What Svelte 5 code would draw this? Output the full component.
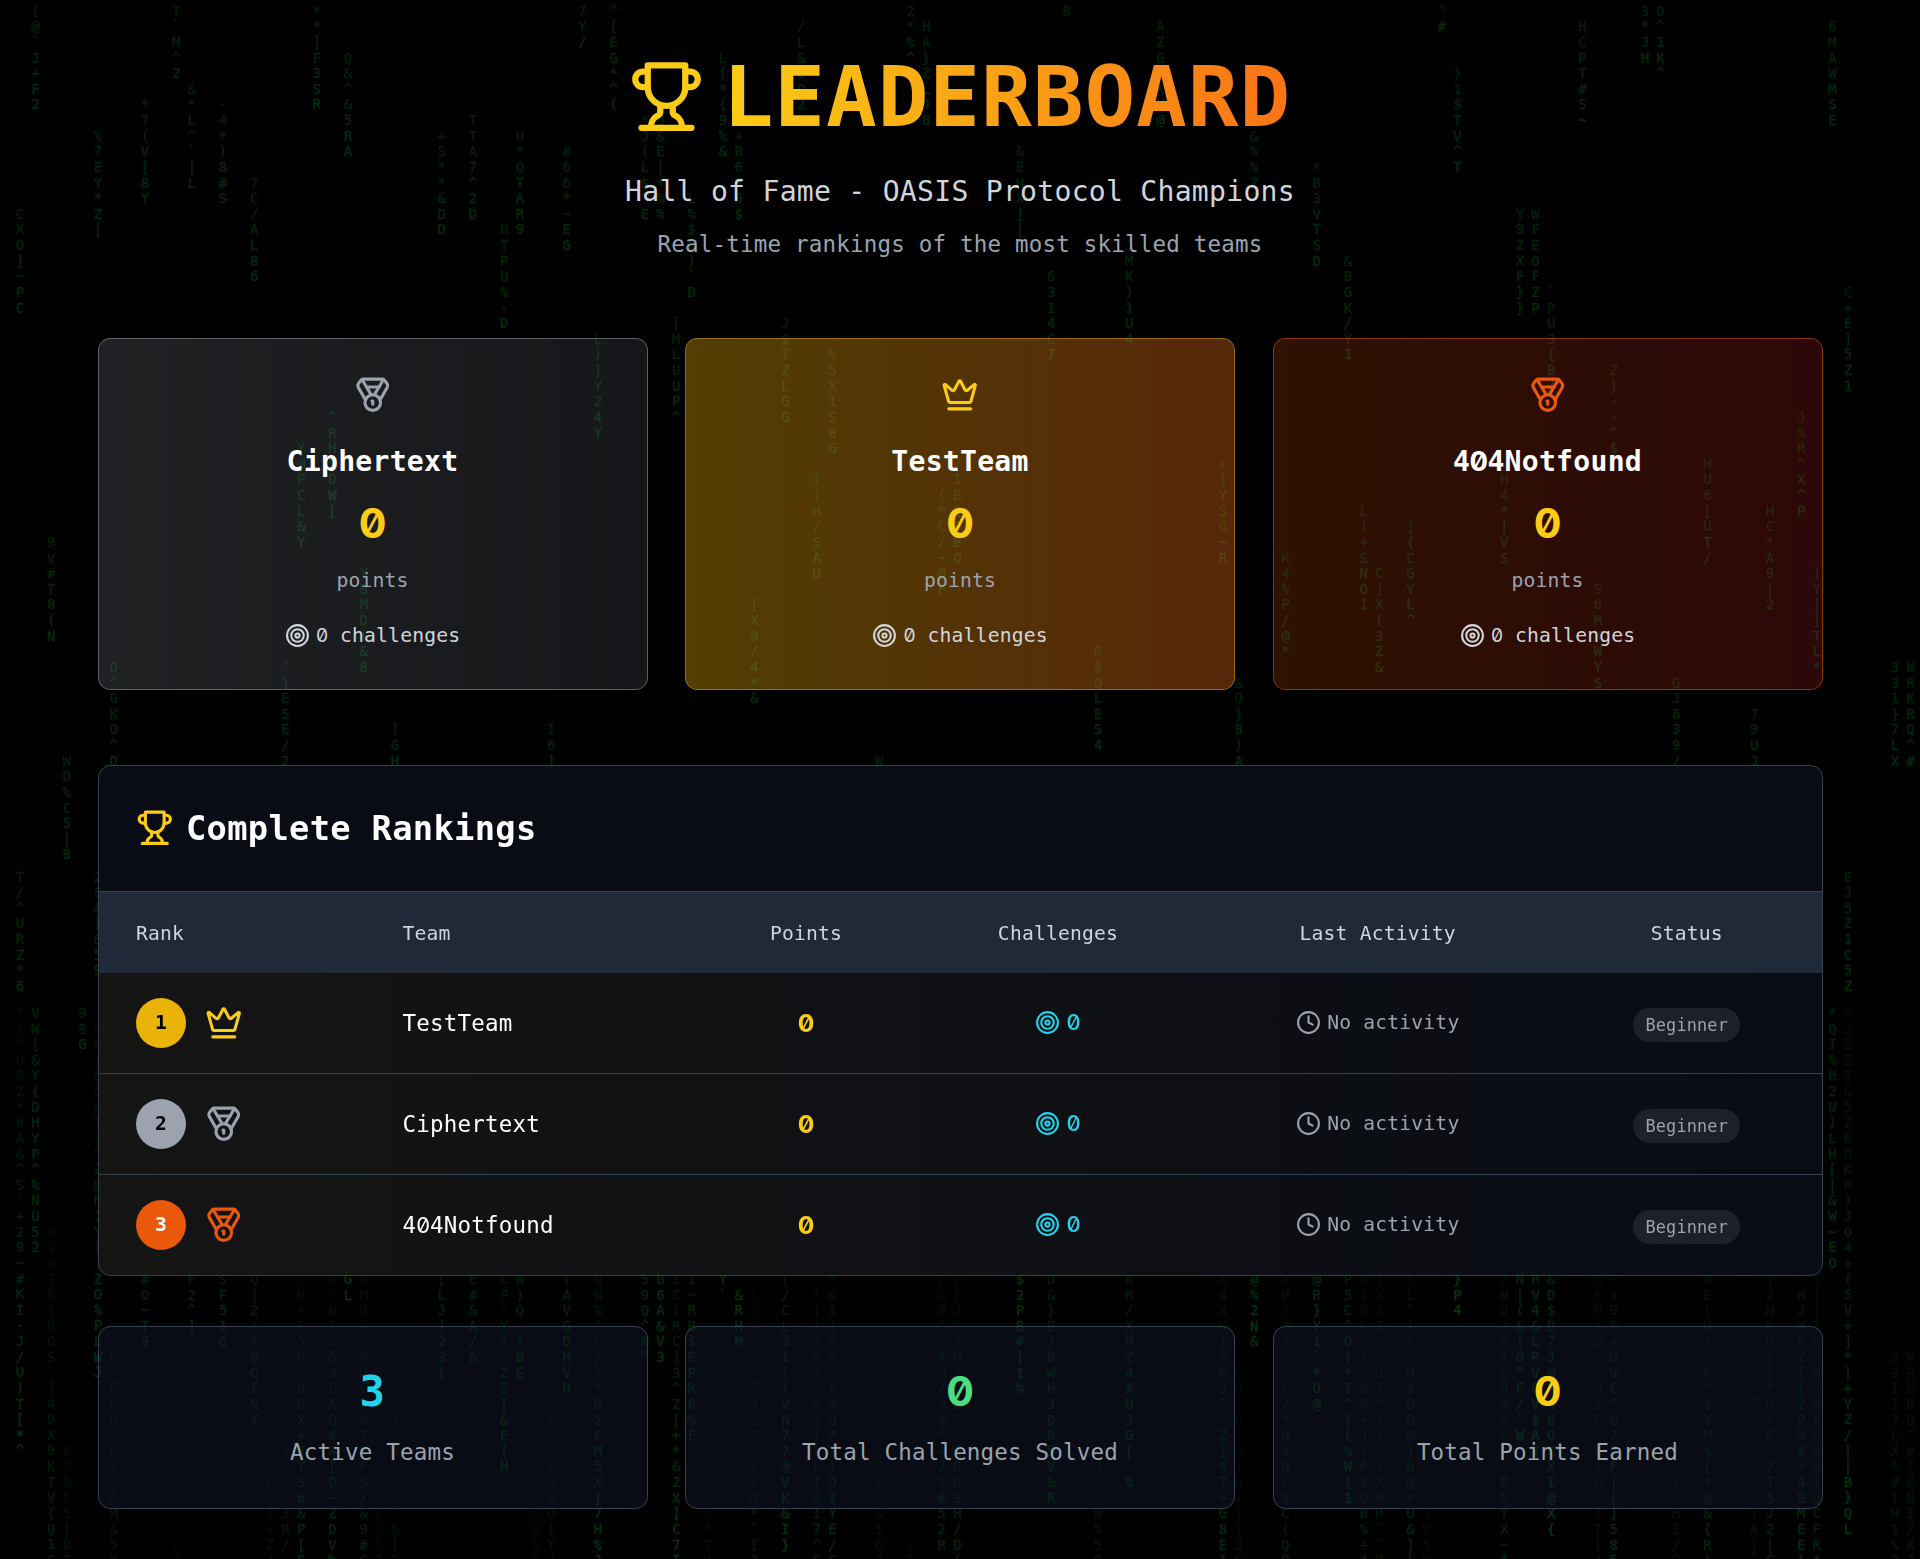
<script>
  const CELL = 15.625;

  // [column, row, glyphs, opacity of first glyph, opacity of last glyph]
  const drops = [
    [2, 0, "[@`J+F2"], [11, 0, "T`M^2"], [20, 0, "**]F3SR"], [22, 3, "Q&^&5RA"], [12, 5, "&*L^`|L"],
    [14, 6, "-4*)8#S"], [9, 6, "*7(V[8Y"], [6, 8, "%7EY*Z|"], [16, 11, "7C/AL86"], [1, 13, "CXO]~PC"],
    [28, 8, "+S**&DD"], [30, 7, "TTA7^2D"], [33, 8, "U*QTAR9"], [36, 9, "#66*~EG"], [32, 14, "HTPU%-D"],
    [37, 0, "7Y/"], [39, 0, "^[EG*^("], [41, 7, "*J(L$^E"], [42, 7, "B&E|*%%"], [44, 12, "L%$Q)`B"],
    [46, 3, "L[*{9%&"], [47, 8, "+B6R9$"], [51, 1, "/L&8Q20"], [58, 0, "2*%^"], [59, 1, "HA}ZL48"],
    [68, 0, "8"], [74, 1, "AZG&KN@"], [65, 9, "&EHX]|"], [67, 16, "`63I4C7"], [72, 15, "JMK)1U4"],
    [80, 6, "4?&%%Z^"], [43, 20, "[MLUUP^"], [50, 20, "J$TZLGG"], [84, 10, "*B3VTSD"], [92, 0, "^#"],
    [93, 4, "}1$TV^T"], [101, 1, "HCPT#S~"], [105, 0, "3*JH"], [106, 0, "O^1K^"], [117, 1, "6MAWMSE"],
    [86, 16, "&BGK/Y1"], [97, 13, "Y9ZXF}}"], [98, 13, "WFEOFZP"], [99, 18, "`PU3{B/"], [118, 18, "C+E]5Z1"],
    [38, 21, "L)]Y24Y"], [21, 26, "^RHYDW["], [19, 28, "Y@PCL&Y"], [3, 34, "9V#T8(N"], [7, 42, "O^GKO^D"],
    [18, 42, "^)E5E/2"], [23, 36, "YBMD+&8"], [25, 46, "]GH"], [35, 46, "16]"], [4, 48, "WO%C5|8"],
    [53, 22, "%5X1S8G"], [52, 30, "})H/SAU"], [48, 38, "[X9/4*&"], [60, 31, "(*C/~@F"], [61, 29, "/1BQPBO"],
    [78, 29, "+[YSG~R"], [70, 41, "R$QLES4"], [79, 43, "&O}8)A"], [56, 48, "W"], [103, 23, "Z}--^$"],
    [115, 26, "J%R^X^P"], [109, 29, "HU6[UT/"], [96, 30, "H4*|VS"], [87, 32, "L)+SNO1"], [90, 33, "]{CGYL^"],
    [88, 36, "C]X(3Z&"], [82, 35, "K4%P/@*"], [113, 32, "HC*A9|2"], [116, 36, "]Y|]TL*"], [102, 37, "S6MKWYS"],
    [107, 43, "GJ639/"], [112, 45, "79UJ"], [121, 42, "331}7LX"], [122, 42, "WRKRQ^#"],
    [1, 55.42, "T/^URZ*6"], [6, 55.42, "Z$#[&59"], [118, 55.42, "EJ5Z1C5Z"],
    [1, 64.15, "T/^URZ*6A&^S`+29~#KI-J/U)T[*^", 0.05, 0.2],
    [2, 64.15, "VW[&Y{DHYP^%NU52"], [5, 64.15, "9SG"],
    [6, 64.15, "2S#[&59T3^Z@N1Y[:ZO%PLWJ", 0.05, 0.2],
    [117, 64.15, "*QT%H2U)LH[|&W~EO"],
    [118, 64.15, "EJ5Z1C5Z6OKP)JO4+{SV+]*|+YZ/||B}QL", 0.05, 0.2],
    [3, 78.15, "9V#T8(NOS`]49X9KTV{Q1C", 0.04, 0.13], [4, 92.15, "WO%C5|8T", 0.05, 0.09],
    [9, 81.17, "#O~T9"], [12, 81.17, "F2^]"], [14, 81.17, "SF51G"], [16, 81.17, "Q]2+Y@QI%Y", 0.1, 0.16],
    [19, 81.17, "@B+S5N-BGX+7TS6&P[E", 0.05, 0.17], [21, 81.17, "4-N5S53CAQ#4[O~ZDV%", 0.06, 0.17],
    [22, 81.17, "GL", 0.2, 0.2], [23, 81.17, "8MD+&8UC78TYFS/&9#C", 0.05, 0.13], [28, 81.17, "[LJ|23("],
    [30, 81.17, "E#&A/&"], [32, 81.17, "CP`Y*-ZS[&F(H", 0.09, 0.2], [33, 81.17, "W)Q-*BE"],
    [36, 81.17, "(AVGDHVN"], [38, 81.17, "QW%^C/Y*D2FM5X]7H%J", 0.07, 0.2], [41, 81.17, "59Q^N^"],
    [7, 86.15, "O^GKO^D|%AM&5Y", 0.05, 0.09], [18, 86.15, "^)E5E/2`~|3R/", 0.04, 0.09],
    [17, 94.15, "FS(-Z/", 0.06, 0.08], [24, 94.15, "9#/J52", 0.04, 0.07],
    [25, 90.15, "]GHR53^&]2", 0.05, 0.08], [35, 90.15, "16]@98O}Y/", 0.05, 0.08],
    [34, 96.15, "%U%F", 0.04, 0.06], [11, 98.15, "U2", 0.04, 0.04],
    [42, 81.17, "B6A&V3", 0.15, 0.2], [43, 81.17, "ZC(RC]3^Z[+*&2X]C7I", 0.08, 0.2],
    [44, 81.17, "I~RB$EPR6%F", 0.12, 0.18], [46, 81.17, "Y`", 0.18, 0.2], [47, 82.17, "&RHM", 0.18, 0.2],
    [48, 82.17, "[X9/4*&4&2`VCQ*`I3", 0.04, 0.1], [50, 81.17, "[/CL3I)(VN77@VK&I}", 0.1, 0.2],
    [52, 82.17, "*}I3S/~#2]7LI2I7^C", 0.06, 0.13], [53, 81.17, "*KI]SR~AWG*7)OIYE/C", 0.07, 0.17],
    [60, 81.17, "FG@C-4@/%%^+J1#52R", 0.05, 0.14], [61, 81.17, "P}J^TMY7B^-QDD3H/D(", 0.05, 0.14],
    [65, 81.17, "$2PB#]1%", 0.18, 0.2], [67, 81.17, "D&}B}DWH3DN5V&R", 0.1, 0.18],
    [70, 85.17, "R$QLES4PQ*LW%5Q", 0.04, 0.08], [72, 81.17, "AR/XHZ4#NJG[`%", 0.1, 0.2],
    [78, 81.17, "X4XU|SMJ^-Z}47~G8E1", 0.06, 0.17], [79, 87.17, "&O}8)A}G+}(J%", 0.04, 0.07],
    [80, 81.17, "@%2N&", 0.18, 0.2], [45, 93.17, "R58%*7R", 0.04, 0.06],
    [56, 92.17, "WSE~&$GJ", 0.04, 0.07], [58, 98.17, "(T", 0.04, 0.05],
    [82, 81.17, "XP/@*`-C/*N4N/$C(QR", 0.06, 0.12], [84, 81.17, "@R}Y1`*O@", 0.16, 0.2],
    [86, 81.17, "P5C^Q}*I^}(%W{1", 0.12, 0.2], [87, 81.17, "O16K%*-N9+J|P2UB%+4", 0.05, 0.13],
    [88, 81.17, "]X(3Z&DI*TXS3XMH^`Y", 0.05, 0.1], [90, 81.17, "YL^[F-M$DO@}B@*U&][", 0.06, 0.15],
    [91, 96.17, "JV5V", 0.05, 0.06], [93, 81.17, "}P4", 0.2, 0.22], [96, 81.17, "/NV/&TL9W*L~~B5YX~$", 0.07, 0.15],
    [97, 81.17, "N|(&(O^F/`W", 0.14, 0.2], [98, 81.17, "RV4&LPVCV$AY", 0.16, 0.22],
    [99, 81.17, "&D$D7J@W46OCXI@X{", 0.14, 0.22], [102, 81.17, "S6M/WYSQ2PR8+B~7T[4", 0.05, 0.08],
    [103, 81.17, "~+9T+DVE^&7JF|{]585", 0.08, 0.18], [107, 87.17, "GJ639/D1%HI/^", 0.04, 0.08],
    [109, 81.17, "WE|U+-F^$YM%[*@&{R)", 0.06, 0.16], [112, 89.17, "79U1|-&YA|`", 0.04, 0.08],
    [113, 81.17, "|2HKH|[*D+P-7T5J2|C", 0.06, 0.15], [115, 81.17, "-HJW6Z{[2P%#+4GMEE}", 0.08, 0.17],
    [116, 81.17, "Y|]TL*W78XCA%+QCFR*", 0.05, 0.13], [121, 86.17, "331}7LX%#)H1%O", 0.06, 0.09],
    [122, 86.17, "WRKRQ^#{@NI/KJ", 0.06, 0.09]
  ];

  const glyphs = drops.flatMap(([col, row, text, from = 0.12, to = 0.17]) =>
    [...text].map((char, i) => ({
      char,
      x: col * CELL,
      y: (row + i + 1) * CELL,
      alpha: from + ((to - from) * i) / Math.max(1, text.length - 1)
    }))
  );

  const podium = [
    { name: 'Ciphertext', icon: 'medal', tone: 'silver' },
    { name: 'TestTeam', icon: 'crown', tone: 'gold' },
    { name: '404Notfound', icon: 'medal', tone: 'bronze' }
  ];

  const rankings = [
    { rank: 1, name: 'TestTeam', icon: 'crown', tone: 'gold' },
    { rank: 2, name: 'Ciphertext', icon: 'medal', tone: 'silver' },
    { rank: 3, name: '404Notfound', icon: 'medal', tone: 'bronze' }
  ];

  const stats = [
    { value: '3', label: 'Active Teams', tone: 'cyan' },
    { value: '0', label: 'Total Challenges Solved', tone: 'green' },
    { value: '0', label: 'Total Points Earned', tone: 'yellow' }
  ];
</script>

<!-- Text whose zeros are set with a slash -->
{#snippet slashed(text)}
  {#each text.split(/(0)/) as part}{#if part === '0'}<span class="zero">0</span>{:else}{part}{/if}{/each}
{/snippet}

{#snippet icon(name, size)}
  <svg class="icon {size}" viewBox="0 0 24 24" aria-hidden="true">
    {#if name === 'trophy'}
      <path d="M6 9H4.5a2.5 2.5 0 0 1 0-5H6" />
      <path d="M18 9h1.5a2.5 2.5 0 0 0 0-5H18" />
      <path d="M4 22h16" />
      <path d="M10 14.66V17c0 .55-.47.98-.97 1.21C7.85 18.75 7 20.24 7 22" />
      <path d="M14 14.66V17c0 .55.47.98.97 1.21C16.15 18.75 17 20.24 17 22" />
      <path d="M18 2H6v7a6 6 0 0 0 12 0V2Z" />
    {:else if name === 'crown'}
      <path d="M11.562 3.266a.5.5 0 0 1 .876 0L15.39 8.87a1 1 0 0 0 1.516.294L21.183 5.5a.5.5 0 0 1 .798.519l-2.834 10.246a1 1 0 0 1-.956.734H5.81a1 1 0 0 1-.957-.734L2.02 6.02a.5.5 0 0 1 .798-.519l4.276 3.664a1 1 0 0 0 1.516-.294z" />
      <path d="M5 21h14" />
    {:else if name === 'medal'}
      <path d="M7.21 15 2.66 7.14a2 2 0 0 1 .13-2.2L4.4 2.8A2 2 0 0 1 6 2h12a2 2 0 0 1 1.6.8l1.6 2.14a2 2 0 0 1 .14 2.2L16.79 15" />
      <path d="M11 12 5.12 2.2" />
      <path d="m13 12 5.88-9.8" />
      <path d="M8 7h8" />
      <circle cx="12" cy="17" r="5" />
      <path d="M12 18v-2h-.5" />
    {:else if name === 'target'}
      <circle cx="12" cy="12" r="10" />
      <circle cx="12" cy="12" r="6" />
      <circle cx="12" cy="12" r="2" />
    {:else if name === 'clock'}
      <circle cx="12" cy="12" r="10" />
      <path d="M12 6v6l4 2" />
    {/if}
  </svg>
{/snippet}

<div class="page">
  <svg class="rain" viewBox="0 0 1920 1559" aria-hidden="true">
    {#each glyphs as g}
      <text x={g.x} y={g.y} opacity={g.alpha}>{g.char}</text>
    {/each}
  </svg>

  <main>
    <header>
      <div class="title">
        <span class="trophy">{@render icon('trophy', 'xl')}</span>
        <h1>LEADERBOARD</h1>
      </div>
      <p class="lead">Hall of Fame - OASIS Protocol Champions</p>
      <p class="sub">Real-time rankings of the most skilled teams</p>
    </header>

    <section class="cards podium">
      {#each podium as team}
        <article class="card {team.tone}">
          <span class="mark">{@render icon(team.icon, 'lg')}</span>
          <h3>{@render slashed(team.name)}</h3>
          <div class="score">{@render slashed('0')}</div>
          <div class="unit">points</div>
          <div class="solved">{@render icon('target', 'sm')}<span>{@render slashed('0 challenges')}</span></div>
        </article>
      {/each}
    </section>

    <section class="rankings">
      <div class="heading">
        <span class="trophy">{@render icon('trophy', 'lg')}</span>
        <h2>Complete Rankings</h2>
      </div>
      <table>
        <colgroup>
          <col class="c-rank" /><col class="c-team" /><col class="c-points" />
          <col class="c-solved" /><col class="c-activity" /><col />
        </colgroup>
        <thead>
          <tr>
            <th class="left">Rank</th>
            <th class="left">Team</th>
            <th>Points</th>
            <th>Challenges</th>
            <th>Last Activity</th>
            <th>Status</th>
          </tr>
        </thead>
        <tbody>
          {#each rankings as team}
            <tr>
              <td>
                <div class="rank {team.tone}">
                  <span class="badge">{team.rank}</span>
                  <span class="mark">{@render icon(team.icon, 'lg')}</span>
                </div>
              </td>
              <td class="team">{@render slashed(team.name)}</td>
              <td class="points">{@render slashed('0')}</td>
              <td><div class="pair cyan">{@render icon('target', 'sm')}<span>{@render slashed('0')}</span></div></td>
              <td><div class="pair activity">{@render icon('clock', 'sm')}<span>No activity</span></div></td>
              <td><div class="status"><span>Beginner</span></div></td>
            </tr>
          {/each}
        </tbody>
      </table>
    </section>

    <section class="cards">
      {#each stats as stat}
        <article class="card stat">
          <div class="score {stat.tone}">{@render slashed(stat.value)}</div>
          <div class="label">{stat.label}</div>
        </article>
      {/each}
    </section>
  </main>
</div>

<style>
  :global(html) {
    font-size: 25px;
    background: #000;
  }

  * {
    box-sizing: border-box;
    margin: 0;
    letter-spacing: 0.009em;
  }

  .page {
    position: relative;
    height: 1559px;
    overflow: hidden;
    background: #000;
    color: #fff;
    font-family: Consolas, 'DejaVu Sans Mono', monospace;
    font-size: 0.9rem;
    line-height: 1.5rem;
  }

  .zero {
    display: inline-block;
    width: 0.707em;
    margin: 0 -0.04em;
    font-family: Inter, sans-serif;
    font-size: 0.975em;
    font-feature-settings: 'zero' 1;
    letter-spacing: 0;
    line-height: 1;
    text-align: center;
  }

  .rain {
    position: absolute;
    inset: 0;
    width: 100%;
    height: 100%;
    font-size: 14px;
    fill: #00ff41;
    stroke: #00ff41;
    stroke-width: 0.35px;
  }

  main {
    position: relative;
    width: 69rem;
    margin: 0 auto;
    padding: 2rem 0;
  }

  .icon {
    display: block;
    flex: none;
    fill: none;
    stroke: currentColor;
    stroke-width: 2;
    stroke-linecap: round;
    stroke-linejoin: round;
  }
  .sm { width: 1rem; height: 1rem; }
  .lg { width: 1.5rem; height: 1.5rem; }
  .xl { width: 3rem; height: 3rem; }

  header {
    margin-bottom: 3rem;
    text-align: center;
  }
  .title {
    display: flex;
    align-items: center;
    justify-content: center;
    gap: 0.75rem;
    height: 3.75rem;
    margin-bottom: 1rem;
  }
  .trophy { color: #facc15; }
  h1 {
    padding-top: 2px;
    font-size: 3.375rem;
    line-height: 3.75rem;
    font-weight: 700;
    letter-spacing: 0.0105em;
    background: linear-gradient(to right, #facc15, #f97316);
    background-clip: text;
    color: transparent;
  }
  .lead {
    height: 1.75rem;
    color: #d1d5db;
    font-size: 1.125rem;
    line-height: 1.83rem;
  }
  .sub {
    height: 1.5rem;
    margin-top: 0.5rem;
    color: #9ca3af;
    line-height: 1.58rem;
  }

  .cards {
    display: grid;
    grid-template-columns: repeat(3, 1fr);
    gap: 1.5rem;
  }
  .podium { margin-bottom: 3rem; }
  .card {
    display: flex;
    flex-direction: column;
    align-items: center;
    padding: 1.5rem;
    border: 1px solid;
    border-radius: 0.5rem;
  }
  .card.silver {
    border-color: rgba(156, 163, 175, 0.5);
    background: linear-gradient(to right, rgba(156, 163, 175, 0.2), rgba(107, 114, 128, 0.2));
  }
  .card.gold {
    border-color: rgba(234, 179, 8, 0.45);
    background: linear-gradient(to right, rgba(234, 179, 8, 0.35), rgba(234, 106, 26, 0.37));
  }
  .card.bronze {
    border-color: rgba(234, 88, 12, 0.5);
    background: linear-gradient(to right, rgba(234, 88, 12, 0.2), rgba(220, 38, 38, 0.2));
  }
  .silver .mark { color: #9ca3af; }
  .gold .mark { color: #facc15; }
  .bronze .mark { color: #ea580c; }

  h3 {
    height: 1.75rem;
    margin: 1rem 0 0.5rem;
    font-size: 1.125rem;
    line-height: 1.8rem;
    font-weight: 700;
  }
  .score {
    height: 2.25rem;
    margin-bottom: 0.5rem;
    color: #facc15;
    font-size: 1.6875rem;
    line-height: 2.3rem;
    font-weight: 700;
  }
  .unit {
    height: 1.25rem;
    color: #9ca3af;
    font-size: 0.7875rem;
    line-height: 1.32rem;
  }
  .solved {
    display: flex;
    align-items: center;
    gap: 0.25rem;
    height: 1.25rem;
    margin-top: 1rem;
    color: #d1d5db;
    font-size: 0.7875rem;
    line-height: 1.25rem;
  }

  .rankings {
    overflow: hidden;
    margin-bottom: 2rem;
    border: 1px solid #374151;
    border-radius: 0.5rem;
    background: rgba(17, 24, 39, 0.5);
    backdrop-filter: blur(12px);
  }
  .heading {
    display: flex;
    align-items: center;
    gap: 0.5rem;
    padding: 1.5rem;
    border-bottom: 1px solid #374151;
  }
  h2 {
    height: 2rem;
    font-size: 1.35rem;
    line-height: 2.06rem;
    font-weight: 700;
  }

  table {
    width: 100%;
    table-layout: fixed;
    border-collapse: separate;
    border-spacing: 0;
  }
  .c-rank { width: 266.5px; }
  .c-team { width: 334.4px; }
  .c-points { width: 213.2px; }
  .c-solved { width: 290.8px; }
  .c-activity { width: 348.6px; }
  thead { background: #1f2937; }
  th {
    padding: 1.04rem 1.5rem 0.96rem;
    color: #d1d5db;
    font-size: 0.7875rem;
    line-height: 1.25rem;
    font-weight: 400;
    text-align: center;
  }
  th.left { text-align: left; }
  tbody tr {
    background: linear-gradient(to right, rgba(234, 179, 8, 0.05), transparent);
  }
  td {
    height: 101px;
    padding: 0 1.5rem;
    border-bottom: 1px solid #374151;
    vertical-align: middle;
  }
  tbody tr:last-child td {
    height: 100px;
    border-bottom: 0;
  }
  td.team, td.points { padding-top: 2px; }

  .rank {
    display: flex;
    align-items: center;
    gap: 0.75rem;
  }
  .badge {
    display: flex;
    align-items: center;
    justify-content: center;
    width: 2rem;
    height: 2rem;
    border-radius: 50%;
    color: #000;
    font-size: 0.7875rem;
    font-weight: 700;
  }
  .gold .badge { background: #eab308; }
  .silver .badge { background: #9ca3af; }
  .bronze .badge { background: #ea580c; color: #fff; }

  .points {
    color: #facc15;
    font-size: 1.0125rem;
    font-weight: 700;
    text-align: center;
  }
  .pair {
    display: flex;
    align-items: center;
    justify-content: center;
    gap: 0.25rem;
  }
  .cyan { color: #22d3ee; }
  .pair.cyan .zero { font-weight: 500; }
  .activity {
    color: #9ca3af;
    font-size: 0.7875rem;
  }
  .status {
    display: flex;
    justify-content: center;
    padding-top: 0.15rem;
  }
  .status span {
    padding: 0 0.5rem;
    border-radius: 1rem;
    background: rgba(107, 114, 128, 0.2);
    color: #9ca3af;
    font-size: 0.675rem;
    line-height: 34px;
  }

  .stat {
    border-color: #374151;
    background: rgba(17, 24, 39, 0.5);
  }
  .stat .score { line-height: 2.25rem; }
  .score.cyan { color: #22d3ee; }
  .score.green { color: #4ade80; }
  .label {
    height: 1.5rem;
    color: #9ca3af;
    line-height: 1.56rem;
  }
</style>
